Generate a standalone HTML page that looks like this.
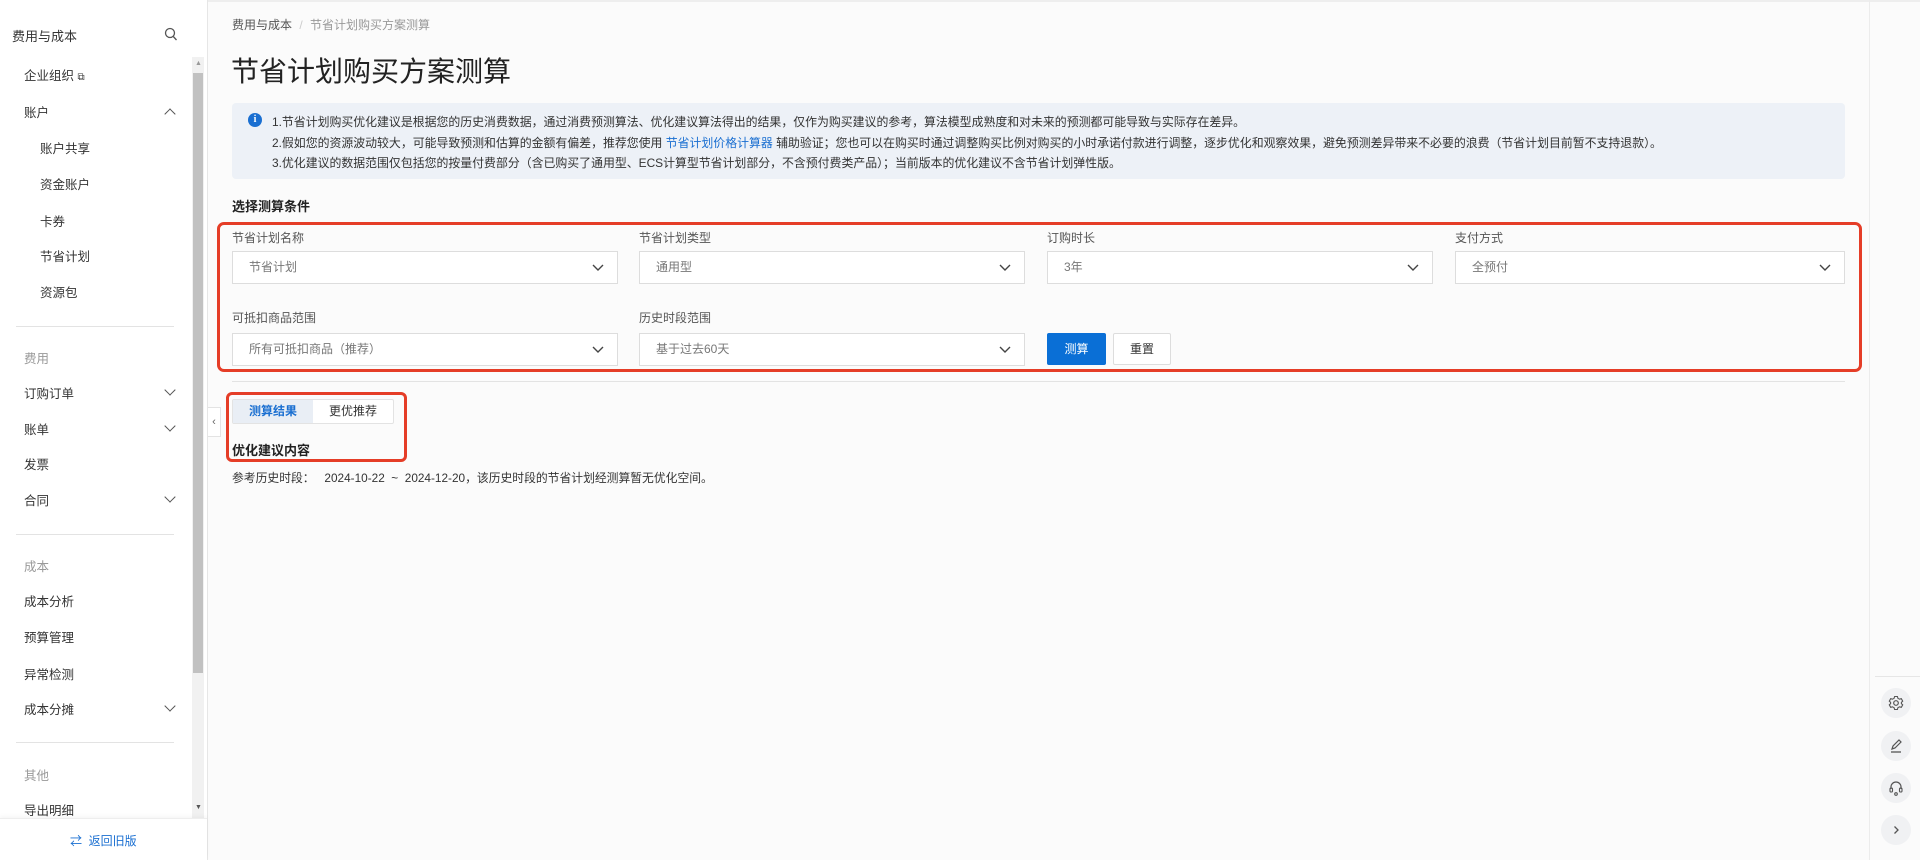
<!DOCTYPE html>
<html><head><meta charset="utf-8"><style>
*{margin:0;padding:0;box-sizing:border-box}
body{width:1920px;height:860px;overflow:hidden;background:#fbfbfb;font-family:"Liberation Sans","Noto Sans CJK SC",sans-serif;color:#333;font-size:12px;position:relative}
.abs{position:absolute}
#side{left:0;top:0;width:208px;height:860px;background:#fff;border-right:1px solid #e6e6e6}
.mi{position:absolute;left:24px;font-size:12.5px;color:#333;line-height:16px}
.sub{left:40px}
.grp{color:#999}
.chev{position:absolute;left:166px;width:8px;height:8px;border-right:1.3px solid #555;border-bottom:1.3px solid #555;transform:rotate(45deg)}
.up{transform:rotate(-135deg)}
.div{position:absolute;left:16px;width:158px;height:1px;background:#e3e3e3}
.lbl{position:absolute;font-size:12px;color:#555}
.sel{position:absolute;height:33px;width:386px;background:#fff;border:1px solid #ddd;font-size:12px;color:#777;line-height:31px;padding-left:16px}
.sel svg{position:absolute;right:12px;top:11px}
.ic{position:absolute;left:1881px;width:30px;height:30px;border-radius:50%;background:#f0f1f3}
</style></head><body>
<div class="abs" style="left:0;top:0;width:1920px;height:2px;background:#eee"></div>
<div id="side" class="abs">
<div class="abs" style="left:12px;top:26px;font-size:13px;color:#333">费用与成本</div>
<svg class="abs" style="left:164px;top:27px" width="14" height="15" viewBox="0 0 14 15"><circle cx="6" cy="6" r="4.5" fill="none" stroke="#555" stroke-width="1.3"/><path d="M9.3 9.5L12.5 13" stroke="#555" stroke-width="1.3"/></svg>
<div class="abs" style="left:192px;top:57px;width:12px;height:761px;background:#f1f1f1"></div>
<div class="abs" style="left:193px;top:73px;width:10px;height:600px;background:#c1c1c1"></div>
<div class="abs" style="left:195px;top:60px;font-size:7px;color:#999">▲</div>
<div class="abs" style="left:195px;top:804px;font-size:7px;color:#555">▼</div>
<div class="mi" style="top:68px">企业组织 <span style="font-size:10px">⧉</span></div>
<div class="mi" style="top:105px">账户</div><div class="chev up" style="top:110px"></div>
<div class="mi sub" style="top:141px">账户共享</div>
<div class="mi sub" style="top:177px">资金账户</div>
<div class="mi sub" style="top:214px">卡券</div>
<div class="mi sub" style="top:249px">节省计划</div>
<div class="mi sub" style="top:285px">资源包</div>
<div class="div" style="top:326px"></div>
<div class="mi grp" style="top:351px">费用</div>
<div class="mi" style="top:386px">订购订单</div><div class="chev" style="top:386px"></div>
<div class="mi" style="top:422px">账单</div><div class="chev" style="top:422px"></div>
<div class="mi" style="top:457px">发票</div>
<div class="mi" style="top:493px">合同</div><div class="chev" style="top:493px"></div>
<div class="div" style="top:534px"></div>
<div class="mi grp" style="top:559px">成本</div>
<div class="mi" style="top:594px">成本分析</div>
<div class="mi" style="top:630px">预算管理</div>
<div class="mi" style="top:667px">异常检测</div>
<div class="mi" style="top:702px">成本分摊</div><div class="chev" style="top:702px"></div>
<div class="div" style="top:742px"></div>
<div class="mi grp" style="top:768px">其他</div>
<div class="mi" style="top:803px">导出明细</div>
<div class="abs" style="left:0;top:818px;width:207px;height:42px;background:#fff;border-top:1px solid #eee;box-shadow:0 -2px 4px rgba(0,0,0,.04)"></div>
<div class="abs" style="left:70px;top:832px;font-size:12px;color:#1a6fd1">⇄&nbsp; 返回旧版</div>
</div>
<div class="abs" style="left:208px;top:407px;width:13px;height:30px;background:#fff;border:1px solid #e3e3e3;border-left:none;font-size:11px;color:#666;line-height:28px;text-align:center">‹</div>

<div class="abs" style="left:232px;top:16px;font-size:12px;color:#555">费用与成本 <span style="color:#ccc;margin:0 4px">/</span> <span style="color:#999">节省计划购买方案测算</span></div>
<div class="abs" style="left:231px;top:50px;font-size:28px;color:#222">节省计划购买方案测算</div>
<div class="abs" style="left:232px;top:103px;width:1613px;height:76px;background:#edf1f7;border-radius:4px"></div>
<div class="abs" style="left:248px;top:113px;width:14px;height:14px;border-radius:50%;background:#1a6fd1;color:#fff;font-size:10px;font-weight:bold;text-align:center;line-height:14px;font-family:'Liberation Serif',serif">i</div>
<div class="abs" style="left:272px;top:112px;font-size:11.9px;color:#333;line-height:20.5px;white-space:nowrap">
1.节省计划购买优化建议是根据您的历史消费数据，通过消费预测算法、优化建议算法得出的结果，仅作为购买建议的参考，算法模型成熟度和对未来的预测都可能导致与实际存在差异。<br>
2.假如您的资源波动较大，可能导致预测和估算的金额有偏差，推荐您使用 <span style="color:#1a6fd1">节省计划价格计算器</span> 辅助验证；您也可以在购买时通过调整购买比例对购买的小时承诺付款进行调整，逐步优化和观察效果，避免预测差异带来不必要的浪费（节省计划目前暂不支持退款）。<br>
3.优化建议的数据范围仅包括您的按量付费部分（含已购买了通用型、ECS计算型节省计划部分，不含预付费类产品）；当前版本的优化建议不含节省计划弹性版。</div>
<div class="abs" style="left:232px;top:196px;font-size:13px;font-weight:bold;color:#222">选择测算条件</div>

<div class="abs" style="left:217px;top:222px;width:1645px;height:150px;border:3px solid #e53d27;border-radius:7px"></div>
<div class="lbl" style="left:232px;top:229px">节省计划名称</div>
<div class="lbl" style="left:639px;top:229px">节省计划类型</div>
<div class="lbl" style="left:1047px;top:229px">订购时长</div>
<div class="lbl" style="left:1455px;top:229px">支付方式</div>
<div class="sel" style="left:232px;top:251px">节省计划<svg width="14" height="10" viewBox="0 0 14 10"><path d="M2 2l5 5 5-5" fill="none" stroke="#444" stroke-width="1.4"/></svg></div>
<div class="sel" style="left:639px;top:251px">通用型<svg width="14" height="10" viewBox="0 0 14 10"><path d="M2 2l5 5 5-5" fill="none" stroke="#444" stroke-width="1.4"/></svg></div>
<div class="sel" style="left:1047px;top:251px">3年<svg width="14" height="10" viewBox="0 0 14 10"><path d="M2 2l5 5 5-5" fill="none" stroke="#444" stroke-width="1.4"/></svg></div>
<div class="sel" style="left:1455px;top:251px;width:390px">全预付<svg width="14" height="10" viewBox="0 0 14 10"><path d="M2 2l5 5 5-5" fill="none" stroke="#444" stroke-width="1.4"/></svg></div>
<div class="lbl" style="left:232px;top:309px">可抵扣商品范围</div>
<div class="lbl" style="left:639px;top:309px">历史时段范围</div>
<div class="sel" style="left:232px;top:333px">所有可抵扣商品（推荐）<svg width="14" height="10" viewBox="0 0 14 10"><path d="M2 2l5 5 5-5" fill="none" stroke="#444" stroke-width="1.4"/></svg></div>
<div class="sel" style="left:639px;top:333px">基于过去60天<svg width="14" height="10" viewBox="0 0 14 10"><path d="M2 2l5 5 5-5" fill="none" stroke="#444" stroke-width="1.4"/></svg></div>
<div class="abs" style="left:1047px;top:333px;width:59px;height:32px;background:#0a6fd6;color:#fff;font-size:12px;text-align:center;line-height:32px;border-radius:2px">测算</div>
<div class="abs" style="left:1113px;top:333px;width:58px;height:32px;background:#fff;border:1px solid #ddd;color:#333;font-size:12px;text-align:center;line-height:30px;border-radius:2px">重置</div>
<div class="abs" style="left:232px;top:381px;width:1613px;height:1px;background:#e3e3e3"></div>

<div class="abs" style="left:226px;top:392px;width:181px;height:70px;border:3px solid #e53d27;border-radius:6px"></div>
<div class="abs" style="left:232px;top:399px;width:162px;height:25px;border:1px solid #e3e3e3;background:#fff;border-radius:2px"></div>
<div class="abs" style="left:233px;top:400px;width:80px;height:23px;background:#e9eef5;color:#1a6fd1;font-size:12px;font-weight:bold;text-align:center;line-height:23px">测算结果</div>
<div class="abs" style="left:313px;top:400px;width:80px;height:23px;color:#333;font-size:12px;text-align:center;line-height:23px">更优推荐</div>
<div class="abs" style="left:232px;top:440px;font-size:13px;font-weight:bold;color:#222">优化建议内容</div>
<div class="abs" style="left:232px;top:469px;font-size:11.8px;color:#333;white-space:pre">参考历史时段：   2024-10-22  ~  2024-12-20，该历史时段的节省计划经测算暂无优化空间。</div>

<div class="abs" style="left:1869px;top:0;width:1px;height:860px;background:#ececec"></div>
<div class="abs" style="left:1875px;top:676px;width:45px;height:1px;background:#e6e6e6"></div>
<div class="ic" style="top:688px"><svg width="30" height="30" viewBox="0 0 30 30"><circle cx="15" cy="15" r="2.3" fill="none" stroke="#555" stroke-width="1.2"/><path d="M13.6 8.5h2.8l.5 1.8 1.6.9 1.8-.5 1.4 2.4-1.3 1.3v1.2l1.3 1.3-1.4 2.4-1.8-.5-1.6.9-.5 1.8h-2.8l-.5-1.8-1.6-.9-1.8.5-1.4-2.4 1.3-1.3v-1.2l-1.3-1.3 1.4-2.4 1.8.5 1.6-.9z" fill="none" stroke="#555" stroke-width="1.1"/></svg></div>
<div class="ic" style="top:731px"><svg width="30" height="30" viewBox="0 0 30 30"><path d="M11 18l1-3 6-6 2 2-6 6z" fill="none" stroke="#555" stroke-width="1.2"/><path d="M10 21h10" stroke="#555" stroke-width="1.3"/></svg></div>
<div class="ic" style="top:773px"><svg width="30" height="30" viewBox="0 0 30 30"><path d="M10 16v-2a5 5 0 0110 0v2" fill="none" stroke="#555" stroke-width="1.2"/><rect x="9" y="15" width="2.5" height="4" rx="1" fill="none" stroke="#555" stroke-width="1.1"/><rect x="18.5" y="15" width="2.5" height="4" rx="1" fill="none" stroke="#555" stroke-width="1.1"/><circle cx="15" cy="21" r="1.3" fill="none" stroke="#555" stroke-width="1.1"/></svg></div>
<div class="ic" style="top:815px"><svg width="30" height="30" viewBox="0 0 30 30"><path d="M13.5 11.5l3.5 3.5-3.5 3.5" fill="none" stroke="#555" stroke-width="1.3"/></svg></div>
</body></html>
